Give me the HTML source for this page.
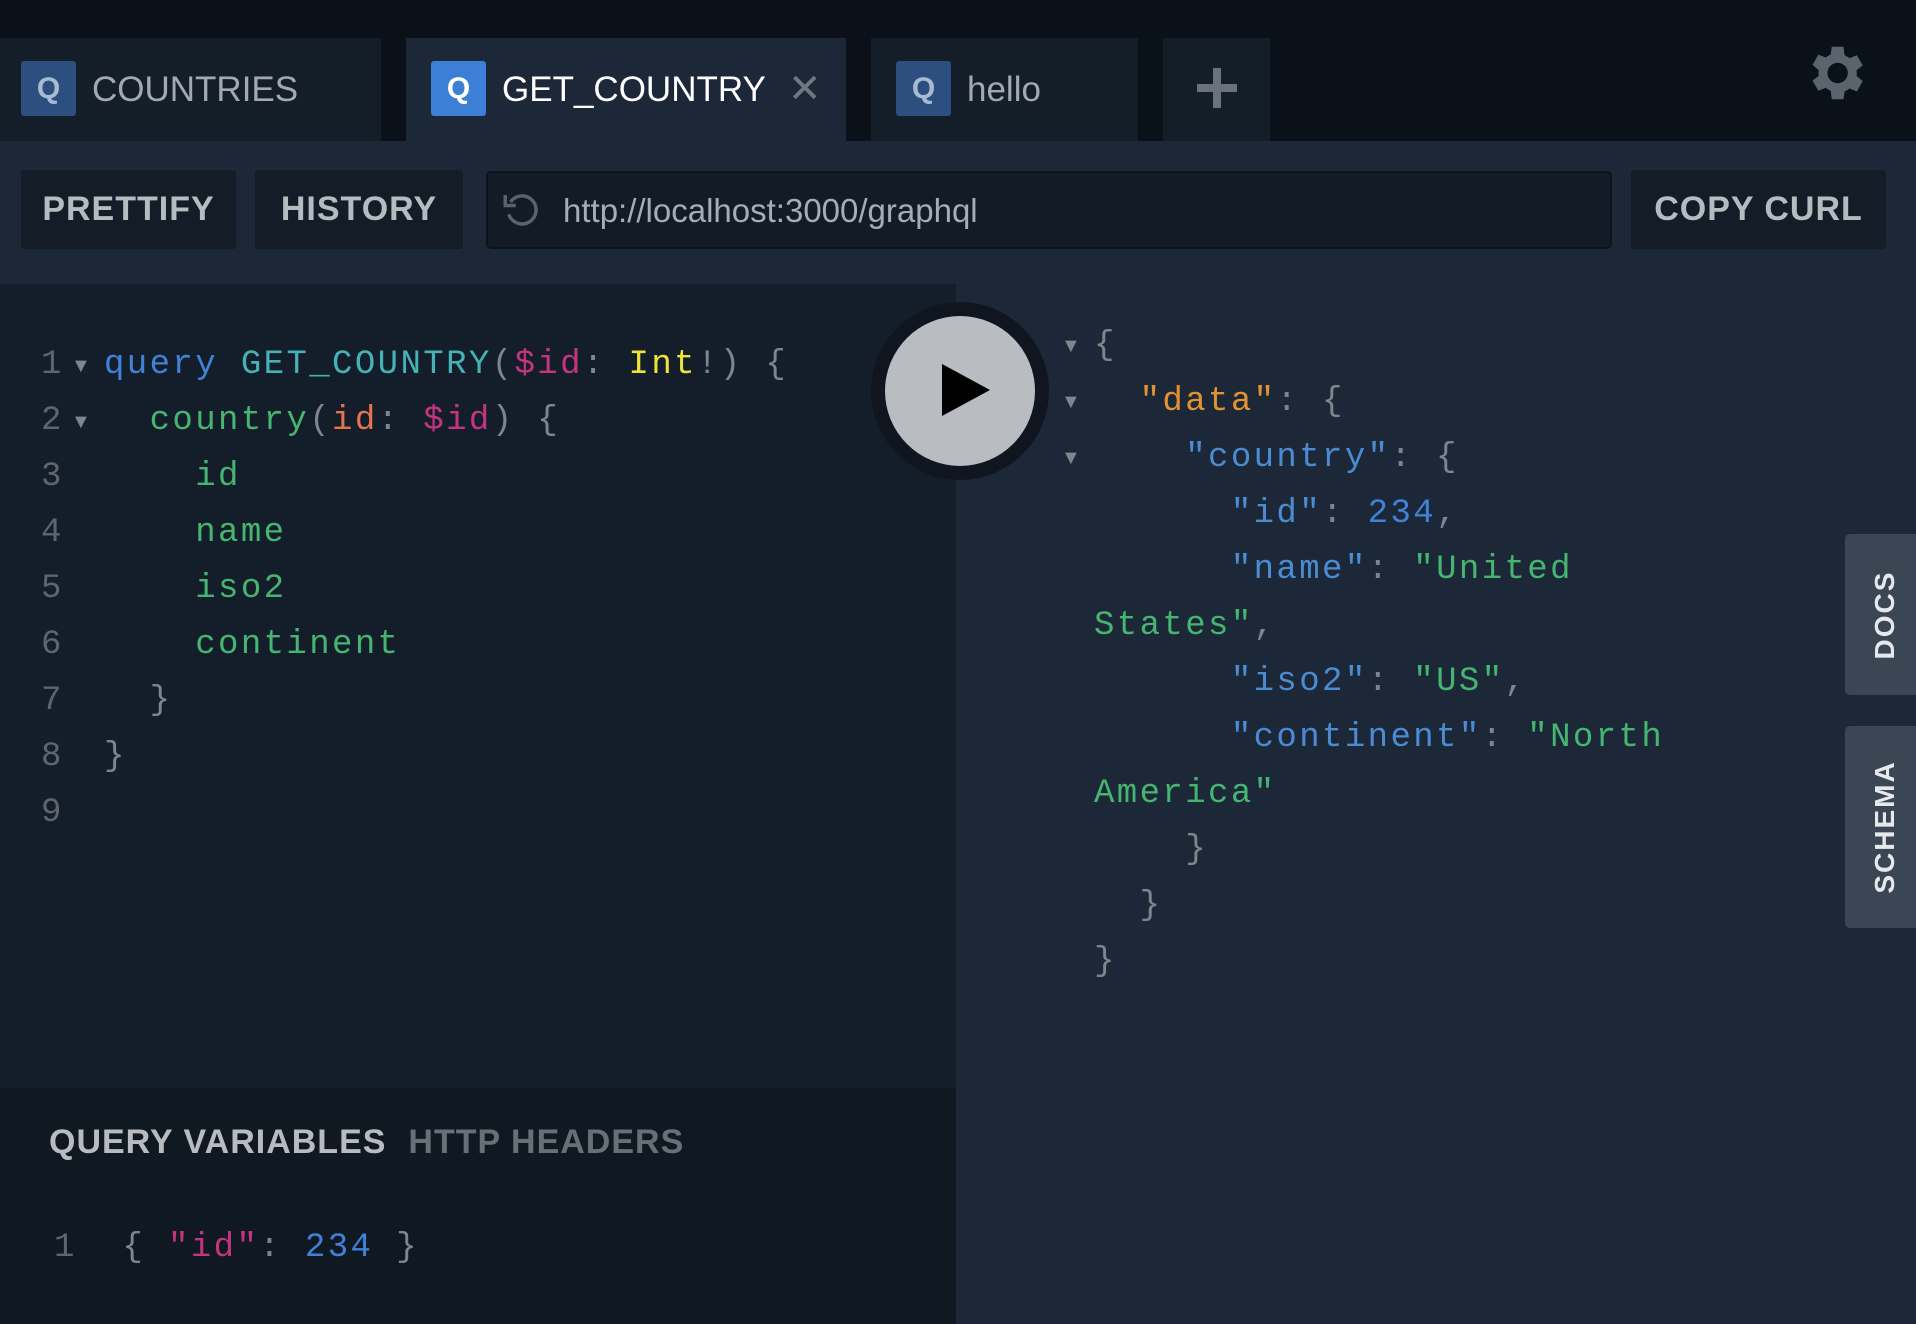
<!DOCTYPE html>
<html><head><meta charset="utf-8"><style>
*{margin:0;padding:0;box-sizing:border-box}
body{width:1916px;height:1324px;background:#0b1118;position:relative;overflow:hidden;font-family:"Liberation Sans",sans-serif}
.a{position:absolute}
.tab{position:absolute;top:38px;height:103px;background:#141e29}
.q{position:absolute;left:21px;top:23px;width:55px;height:55px;border-radius:3px;background:#2c4f80;color:#a9bbd3;font:bold 30px "Liberation Sans",sans-serif;text-align:center;line-height:55px}
.tt{position:absolute;left:92px;top:0;line-height:103px;font-size:35px;color:#a3a9b0;letter-spacing:0px}
.btn{position:absolute;top:170px;height:79px;background:#131c27;border-radius:3px;color:#b6bbc0;font-weight:bold;font-size:34px;line-height:79px;text-align:center;letter-spacing:1px}
.mono{font-family:"Liberation Mono","DejaVu Sans Mono",monospace;font-size:34px;letter-spacing:2.4px;white-space:pre;line-height:56px}
.ln{color:#5d656d}
.g{color:#45b56f}.b{color:#3f82d8}.c{color:#45b3b5}.p{color:#c5347f}.o{color:#e8744d}.y{color:#ede33b}.w{color:#7d858d}.or{color:#e39232}.lb{color:#4a8bd2}
.tri{color:#7d858d;font-size:20px}
.side{position:absolute;left:1845px;width:80px;background:#3a4654;border-radius:5px 0 0 5px}
.side span{position:absolute;left:50%;top:50%;transform:translate(-50%,-50%) rotate(-90deg);color:#e6e9ec;font-weight:bold;font-size:28px;letter-spacing:2px}
</style></head><body>
<div class="tab" style="left:0;width:381px"><div class="q">Q</div><div class="tt">COUNTRIES</div></div>
<div class="tab" style="left:406px;width:440px;background:#1c2838"><div class="q" style="left:25px;background:#3d7fd6;color:#fff">Q</div><div class="tt" style="left:96px;color:#fff">GET_COUNTRY</div><div class="a" style="left:382px;top:0;line-height:103px;font-size:40px;color:#6f7780">✕</div></div>
<div class="tab" style="left:871px;width:267px"><div class="q" style="left:25px">Q</div><div class="tt" style="left:96px">hello</div></div>
<div class="tab" style="left:1163px;width:107px"><div class="a" style="left:34px;top:46px;width:40px;height:8px;background:#6a727b"></div><div class="a" style="left:50px;top:30px;width:8px;height:40px;background:#6a727b"></div></div>
<svg class="a" style="left:1800px;top:38px" width="70" height="70" viewBox="0 0 24 24"><path fill="#5b636c" d="M19.4 13a7.5 7.5 0 0 0 0-2l2.1-1.6-2-3.5-2.5 1a7.4 7.4 0 0 0-1.7-1L14.9 3h-4l-.4 2.7a7.4 7.4 0 0 0-1.7 1l-2.5-1-2 3.5L6.4 11a7.5 7.5 0 0 0 0 2l-2.1 1.6 2 3.5 2.5-1a7.4 7.4 0 0 0 1.7 1l.4 2.9h4l.4-2.7a7.4 7.4 0 0 0 1.7-1l2.5 1 2-3.5zM12.9 15.5a3.5 3.5 0 1 1 0-7 3.5 3.5 0 0 1 0 7z"/></svg>
<div class="a" style="left:0;top:141px;width:1916px;height:143px;background:#1c2838"></div>
<div class="btn" style="left:21px;width:215px">PRETTIFY</div>
<div class="btn" style="left:255px;width:208px">HISTORY</div>
<div class="a" style="left:486px;top:171px;width:1126px;height:78px;background:#121b26;border:2px solid #0c131b;border-radius:5px"></div>
<svg class="a" style="left:500px;top:188px" width="42" height="42" viewBox="0 0 24 24"><path d="M6 8a8 8 0 1 1-1 7" fill="none" stroke="#5a626b" stroke-width="2"/><path d="M3 4v6h6" fill="none" stroke="#5a626b" stroke-width="2"/></svg>
<div class="a" style="left:563px;top:172px;line-height:78px;font-size:33px;color:#a7adb3">http://localhost:3000/graphql</div>
<div class="btn" style="left:1631px;width:255px">COPY CURL</div>
<div class="a" style="left:0;top:284px;width:956px;height:804px;background:#141e2b"></div>
<div class="a" style="left:956px;top:284px;width:960px;height:1040px;background:#1c2838"></div>
<div class="a" style="left:0;top:1088px;width:956px;height:236px;background:#101821"></div>
<div class="a mono ln" style="left:41px;top:337px">1
2
3
4
5
6
7
8
9</div>
<div class="a tri" style="left:71px;top:355px">▼</div>
<div class="a tri" style="left:71px;top:411px">▼</div>
<div class="a mono" style="left:104px;top:337px"><span class="b">query</span> <span class="c">GET_COUNTRY</span><span class="w">(</span><span class="p">$id</span><span class="w">:</span> <span class="y">Int</span><span class="w">!) {</span>
  <span class="g">country</span><span class="w">(</span><span class="o">id</span><span class="w">:</span> <span class="p">$id</span><span class="w">) {</span>
    <span class="g">id</span>
    <span class="g">name</span>
    <span class="g">iso2</span>
    <span class="g">continent</span>
  <span class="w">}</span>
<span class="w">}</span></div>
<div class="a" style="left:871px;top:302px;width:178px;height:178px;border-radius:50%;background:#0f1620"></div>
<div class="a" style="left:885px;top:316px;width:150px;height:150px;border-radius:50%;background:#b9bdc1"></div>
<svg class="a" style="left:940px;top:362px" width="52" height="56" viewBox="0 0 52 56"><path d="M2 2L50 28L2 54z" fill="#000"/></svg>
<div class="a tri" style="left:1061px;top:335px">▼</div>
<div class="a tri" style="left:1061px;top:391px">▼</div>
<div class="a tri" style="left:1061px;top:447px">▼</div>
<div class="a mono" style="left:1094px;top:318px"><span class="w">{</span>
  <span class="or">"data"</span><span class="w">: {</span>
    <span class="lb">"country"</span><span class="w">: {</span>
      <span class="lb">"id"</span><span class="w">:</span> <span class="b">234</span><span class="w">,</span>
      <span class="lb">"name"</span><span class="w">:</span> <span class="g">"United</span>
<span class="g">States"</span><span class="w">,</span>
      <span class="lb">"iso2"</span><span class="w">:</span> <span class="g">"US"</span><span class="w">,</span>
      <span class="lb">"continent"</span><span class="w">:</span> <span class="g">"North</span>
<span class="g">America"</span>
    <span class="w">}</span>
  <span class="w">}</span>
<span class="w">}</span></div>
<div class="side" style="top:534px;height:161px"><span>DOCS</span></div>
<div class="side" style="top:726px;height:202px"><span>SCHEMA</span></div>
<div class="a" style="left:49px;top:1123px;font-weight:bold;font-size:34px;color:#b8bcc0;letter-spacing:1px;white-space:nowrap">QUERY VARIABLES<span style="color:#686f77;margin-left:22px">HTTP HEADERS</span></div>
<div class="a mono" style="left:54px;top:1220px"><span class="ln">1</span>  <span class="w">{</span> <span class="p">"id"</span><span class="w">:</span> <span class="b">234</span> <span class="w">}</span></div>
</body></html>
